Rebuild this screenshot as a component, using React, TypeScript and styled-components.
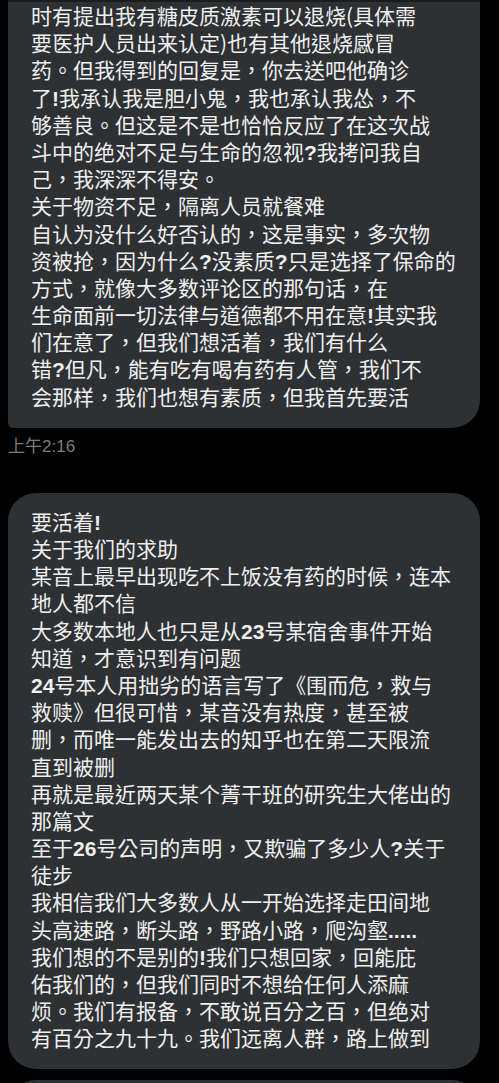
import React from "react";
import styled, { createGlobalStyle } from "styled-components";

const GlobalStyle = createGlobalStyle`
  html, body {
    margin: 0;
    padding: 0;
    background: #000;
  }
  body {
    font-family: "Noto Sans CJK TC", "Noto Sans CJK SC", sans-serif;
  }
`;

const Page = styled.div`
  width: 499px;
  height: 1083px;
  overflow: hidden;
  background: #000;
  display: flex;
  flex-direction: column;
  padding: 0 19px 0 8px;
  box-sizing: border-box;
`;

type BubbleProps = { $tl?: number; $tr?: number; $bl?: number; $br?: number };

const Bubble = styled.div<BubbleProps>`
  background: #2e3134;
  border-radius: ${(p) => p.$tl ?? 28}px ${(p) => p.$tr ?? 28}px
    ${(p) => p.$br ?? 28}px ${(p) => p.$bl ?? 28}px;
  padding: 15px 20px 17px 23px;
  display: flex;
  flex-direction: column;
  flex-shrink: 0;
`;

const TopBubble = styled(Bubble)`
  border-top: 5px solid #1a1c1e;
  padding-top: 0;
  margin-top: -3px;
  padding-bottom: 18px;
`;

const Line = styled.div`
  font-family: "Noto Sans CJK TC", "Noto Sans CJK SC", sans-serif;
  font-size: 21px;
  line-height: 27.2px;
  height: 27.2px;
  color: #efefef;
  white-space: pre;
`;

const Latin = styled.span`
  font-family: "Liberation Sans", "Noto Sans CJK TC", sans-serif;
  font-weight: 700;
`;

const Time = styled.div`
  font-family: "Liberation Sans", "Noto Sans CJK TC", sans-serif;
  font-size: 17px;
  line-height: 20px;
  color: #7c7c7c;
  margin: 9px 0 36px 0;
`;

const Peek = styled.div`
  margin-top: 11px;
  height: 40px;
  background: #2e3134;
  border-radius: 28px 28px 0 0;
  flex-shrink: 0;
`;

const renderLine = (text: string) => {
  const parts = text.split(/([A-Za-z0-9!?.()\-:]+)/);
  return parts.map((p, i) =>
    /^[A-Za-z0-9!?.\-:]+$/.test(p) ? <Latin key={i}>{p}</Latin> : <React.Fragment key={i}>{p}</React.Fragment>
  );
};

const first = [
  "时有提出我有糖皮质激素可以退烧(具体需",
  "要医护人员出来认定)也有其他退烧感冒",
  "药。但我得到的回复是，你去送吧他确诊",
  "了!我承认我是胆小鬼，我也承认我怂，不",
  "够善良。但这是不是也恰恰反应了在这次战",
  "斗中的绝对不足与生命的忽视?我拷问我自",
  "己，我深深不得安。",
  "关于物资不足，隔离人员就餐难",
  "自认为没什么好否认的，这是事实，多次物",
  "资被抢，因为什么?没素质?只是选择了保命的",
  "方式，就像大多数评论区的那句话，在",
  "生命面前一切法律与道德都不用在意!其实我",
  "们在意了，但我们想活着，我们有什么",
  "错?但凡，能有吃有喝有药有人管，我们不",
  "会那样，我们也想有素质，但我首先要活",
];

const second = [
  "要活着!",
  "关于我们的求助",
  "某音上最早出现吃不上饭没有药的时候，连本",
  "地人都不信",
  "大多数本地人也只是从23号某宿舍事件开始",
  "知道，才意识到有问题",
  "24号本人用拙劣的语言写了《围而危，救与",
  "救赎》但很可惜，某音没有热度，甚至被",
  "删，而唯一能发出去的知乎也在第二天限流",
  "直到被删",
  "再就是最近两天某个菁干班的研究生大佬出的",
  "那篇文",
  "至于26号公司的声明，又欺骗了多少人?关于",
  "徒步",
  "我相信我们大多数人从一开始选择走田间地",
  "头高速路，断头路，野路小路，爬沟壑.....",
  "我们想的不是别的!我们只想回家，回能庇",
  "佑我们的，但我们同时不想给任何人添麻",
  "烦。我们有报备，不敢说百分之百，但绝对",
  "有百分之九十九。我们远离人群，路上做到",
];

export default function App() {
  return (
    <>
      <GlobalStyle />
      <Page>
        <TopBubble $tl={0} $tr={0} $bl={5} $br={28}>
          {first.map((l, i) => (
            <Line key={i}>{renderLine(l)}</Line>
          ))}
        </TopBubble>
        <Time>上午2:16</Time>
        <Bubble>
          {second.map((l, i) => (
            <Line key={i}>{renderLine(l)}</Line>
          ))}
        </Bubble>
        <Peek />
      </Page>
    </>
  );
}
